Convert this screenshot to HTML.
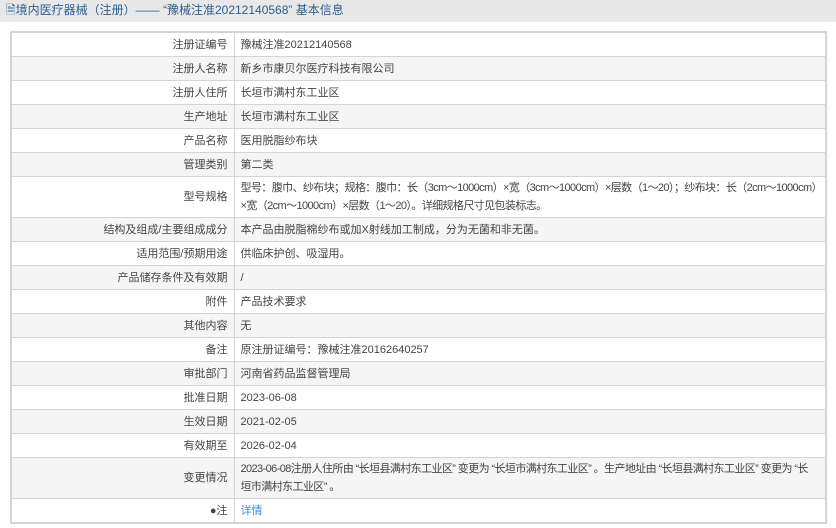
<!DOCTYPE html>
<html><head><meta charset="utf-8"><style>
body{margin:0;width:836px;height:528px;background:#fff;font-family:"Liberation Sans","Noto Sans CJK SC",sans-serif;font-size:11px;color:#444;overflow:hidden}
.hd{height:22px;background:#e8e8e8;line-height:20px;padding-left:6px;font-size:12px;color:#2a5f93}
table{position:absolute;left:10px;top:31px;width:817px;border-collapse:collapse;border:2px solid #d4d4d4;table-layout:fixed}
td{border:1px solid #d4d4d4;height:23px;padding:0 6px;line-height:18px;white-space:nowrap;overflow:hidden}
td.l{text-align:right}
td.t{letter-spacing:-0.6px}
tr:nth-child(even) td{background:#f5f5f5}
a{color:#3a8ee6;text-decoration:none}
</style></head><body>
<div class="hd">🗎境内医疗器械（注册）—— “豫械注准20212140568” 基本信息</div>
<table>
<colgroup><col style="width:223px"><col></colgroup>
<tr><td class="l">注册证编号</td><td>豫械注准20212140568</td></tr>
<tr><td class="l">注册人名称</td><td>新乡市康贝尔医疗科技有限公司</td></tr>
<tr><td class="l">注册人住所</td><td>长垣市满村东工业区</td></tr>
<tr><td class="l">生产地址</td><td>长垣市满村东工业区</td></tr>
<tr><td class="l">产品名称</td><td>医用脱脂纱布块</td></tr>
<tr><td class="l">管理类别</td><td>第二类</td></tr>
<tr><td class="l" style="height:40px">型号规格</td><td class="t">型号：腹巾、纱布块；规格：腹巾：长（3cm～1000cm）×宽（3cm～1000cm）×层数（1～20）；纱布块：长（2cm～1000cm）<br>×宽（2cm～1000cm）×层数（1～20）。详细规格尺寸见包装标志。</td></tr>
<tr><td class="l">结构及组成/主要组成成分</td><td>本产品由脱脂棉纱布或加X射线加工制成，分为无菌和非无菌。</td></tr>
<tr><td class="l">适用范围/预期用途</td><td>供临床护创、吸湿用。</td></tr>
<tr><td class="l">产品储存条件及有效期</td><td>/</td></tr>
<tr><td class="l">附件</td><td>产品技术要求</td></tr>
<tr><td class="l">其他内容</td><td>无</td></tr>
<tr><td class="l">备注</td><td>原注册证编号：豫械注准20162640257</td></tr>
<tr><td class="l">审批部门</td><td>河南省药品监督管理局</td></tr>
<tr><td class="l">批准日期</td><td>2023-06-08</td></tr>
<tr><td class="l">生效日期</td><td>2021-02-05</td></tr>
<tr><td class="l">有效期至</td><td>2026-02-04</td></tr>
<tr><td class="l" style="height:40px">变更情况</td><td class="t">2023-06-08注册人住所由 “长垣县满村东工业区” 变更为 “长垣市满村东工业区” 。生产地址由 “长垣县满村东工业区” 变更为 “长<br>垣市满村东工业区” 。</td></tr>
<tr><td class="l">●注</td><td><a>详情</a></td></tr>
</table>
</body></html>
